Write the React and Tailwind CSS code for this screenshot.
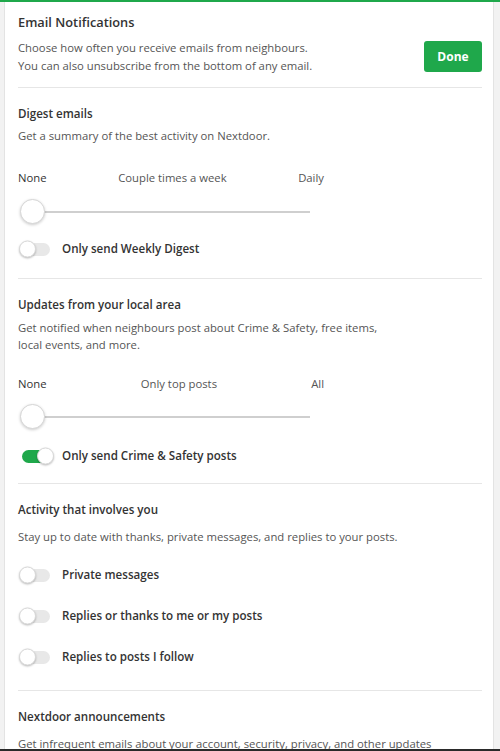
import React, { useState } from 'react';

const Toggle = ({ on, onChange }) => (
  <button
    type="button"
    onClick={onChange}
    className={`relative w-[28px] h-[13px] rounded-full shrink-0 ${on ? 'bg-[#1fa84b]' : 'bg-[#e8e8e8]'}`}
  >
    <span
      className={`absolute top-1/2 -translate-y-1/2 w-[17px] h-[17px] rounded-full bg-white border border-[#d8d8d8] shadow-[0_1px_2px_rgba(0,0,0,0.25)] ${on ? 'left-[15px]' : 'left-[-3px]'}`}
    />
  </button>
);

const Slider = () => (
  <div className="relative h-[26px] w-[292px] flex items-center">
    <div className="ml-[16px] flex-1 h-[2px] bg-[#cfcfcf]" />
    <span className="absolute left-[2px] top-0 w-[25px] h-[25px] rounded-full bg-white border border-[#d6d6d6] shadow-[0_1px_3px_rgba(0,0,0,0.2)]" />
  </div>
);

const ToggleRow = ({ label, on, onChange }) => (
  <div className="flex items-center h-[20px]">
    <div className="w-[44px] pl-[4px] flex items-center">
      <Toggle on={on} onChange={onChange} />
    </div>
    <span className="text-[11.6px] font-semibold text-[#333]">{label}</span>
  </div>
);

const Section = ({ title, children }) => (
  <div className="border-t border-[#e6e6e6] pt-[17px]">
    <h3 className="text-[11.6px] font-semibold text-[#333] leading-[18px]">{title}</h3>
    {children}
  </div>
);

const App = () => {
  const [weekly, setWeekly] = useState(false);
  const [crime, setCrime] = useState(true);
  const [pm, setPm] = useState(false);
  const [replies, setReplies] = useState(false);
  const [follow, setFollow] = useState(false);

  return (
    <div
      className="h-[751px] flex flex-col bg-[#f2f2f2] overflow-hidden"
      style={{ fontFamily: '"Open Sans", "Noto Sans", sans-serif' }}
    >
      <div className="h-[2px] bg-[#1fa84b] shrink-0" />
      <div className="flex-1 min-h-0 ml-[4px] mr-[6px] bg-white border-l border-r border-[#e3e3e3] pl-[13px] pr-[11px] overflow-hidden">
        {/* Header */}
        <div className="pt-[11px] pb-[12px]">
          <h2 className="text-[12.8px] font-semibold text-[#333] leading-[18px]">Email Notifications</h2>
          <div className="flex items-start justify-between mt-[8px]">
            <p className="text-[11.3px] text-[#555] leading-[18px]">
              Choose how often you receive emails from neighbours.
              <br />
              You can also unsubscribe from the bottom of any email.
            </p>
            <button className="mt-[2px] w-[58px] h-[31px] rounded-[3px] bg-[#1fa84b] text-white text-[12px] font-bold">
              Done
            </button>
          </div>
        </div>

        {/* Digest */}
        <Section title="Digest emails">
          <p className="text-[11.3px] text-[#555] leading-[18px] mt-[4px]">Get a summary of the best activity on Nextdoor.</p>
          <div className="flex justify-between w-[306px] mt-[24px] text-[11.3px] leading-[18px] text-[#555]">
            <span className="text-[#333]">None</span>
            <span>Couple times a week</span>
            <span>Daily</span>
          </div>
          <div className="mt-[12px]">
            <Slider />
          </div>
          <div className="mt-[14px] pb-[19px]">
            <ToggleRow label="Only send Weekly Digest" on={weekly} onChange={() => setWeekly(!weekly)} />
          </div>
        </Section>

        {/* Local area */}
        <Section title="Updates from your local area">
          <p className="text-[11.3px] text-[#555] leading-[17px] mt-[5px]">
            Get notified when neighbours post about Crime &amp; Safety, free items,
            <br />
            local events, and more.
          </p>
          <div className="flex justify-between w-[306px] mt-[22px] text-[11.3px] leading-[18px] text-[#555]">
            <span className="text-[#333]">None</span>
            <span>Only top posts</span>
            <span>All</span>
          </div>
          <div className="mt-[11px]">
            <Slider />
          </div>
          <div className="mt-[16px] pb-[17px]">
            <ToggleRow label="Only send Crime & Safety posts" on={crime} onChange={() => setCrime(!crime)} />
          </div>
        </Section>

        {/* Activity */}
        <Section title="Activity that involves you">
          <p className="text-[11.3px] text-[#555] leading-[18px] mt-[9px]">
            Stay up to date with thanks, private messages, and replies to your posts.
          </p>
          <div className="mt-[19px] flex flex-col gap-[21px] pb-[23px]">
            <ToggleRow label="Private messages" on={pm} onChange={() => setPm(!pm)} />
            <ToggleRow label="Replies or thanks to me or my posts" on={replies} onChange={() => setReplies(!replies)} />
            <ToggleRow label="Replies to posts I follow" on={follow} onChange={() => setFollow(!follow)} />
          </div>
        </Section>

        {/* Announcements */}
        <Section title="Nextdoor announcements">
          <p className="text-[11.3px] text-[#555] leading-[18px] mt-[9px]">
            Get infrequent emails about your account, security, privacy, and other updates
          </p>
        </Section>
      </div>
      <div className="h-[2px] bg-[#2a2a2a] shrink-0" />
    </div>
  );
};

export default App;
